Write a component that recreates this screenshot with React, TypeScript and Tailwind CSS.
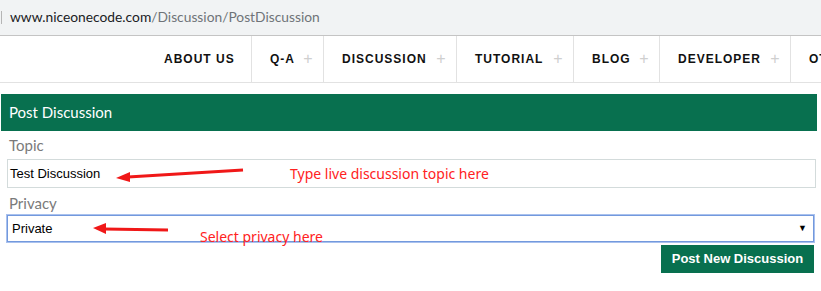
import React from 'react';

const navItems = [
  { label: 'ABOUT US', width: 'w-[106px]', plus: false },
  { label: 'Q-A', width: 'w-[72px]', plus: true },
  { label: 'DISCUSSION', width: 'w-[133px]', plus: true },
  { label: 'TUTORIAL', width: 'w-[117px]', plus: true },
  { label: 'BLOG', width: 'w-[86px]', plus: true },
  { label: 'DEVELOPER', width: 'w-[131px]', plus: true },
  { label: 'OTHERS', width: 'w-[120px]', plus: true },
];

function AddressBar() {
  return (
    <div className="h-[36px] bg-[#f1f3f4] border-b border-[#c4c4c4] flex items-center">
      <div className="w-px h-[13px] bg-[#b5b5b5] ml-px mr-[8px]" />
      <span className="text-[13.8px] font-['Lato',sans-serif] text-[#202124]">
        www.niceonecode.com<span className="text-[#6f7378]">/Discussion/PostDiscussion</span>
      </span>
    </div>
  );
}

function NavBar() {
  return (
    <div className="h-[47px] border-b border-[#e2e2e2] flex pl-[146px] overflow-hidden whitespace-nowrap">
      {navItems.map((item, i) => (
        <div
          key={item.label}
          className={`${item.width} shrink-0 h-full flex items-center justify-between pl-[18px] pr-[10px] ${
            i < navItems.length - 1 ? 'border-r border-[#e2e2e2]' : ''
          }`}
        >
          <span className="font-['Liberation_Sans',sans-serif] font-bold text-[12px] tracking-[1px] text-[#111]">
            {item.label}
          </span>
          {item.plus && (
            <span className="w-[10px] text-center text-[16px] leading-none text-[#cfcfcf] font-['Liberation_Sans',sans-serif]">
              +
            </span>
          )}
        </div>
      ))}
    </div>
  );
}

function PostForm() {
  return (
    <div className="relative pt-[11px] font-['Lato',sans-serif]">
      <div className="ml-px w-[816px] h-[37px] bg-[#08704f] flex items-center pl-[8px]">
        <span className="text-white text-[15px]">Post Discussion</span>
      </div>

      <div className="pl-[7px] pr-[5px]">
        <div className="mt-[4px] h-[24px] flex items-center pb-[3px] pl-[2px] text-[15px] text-[#7a7a7a]">Topic</div>
        <div className="h-[29px] border border-[#d3dbdb] flex items-center pl-[2px] font-['Liberation_Sans',sans-serif] text-[13px] text-black">
          Test Discussion
        </div>

        <div className="mt-[4px] h-[23px] flex items-center pb-[1px] pl-[2px] text-[15px] text-[#7a7a7a]">Privacy</div>
        <div className="mr-[2px] h-[27px] border border-[#7399dd] shadow-[0_0_0_1px_#a9c1ee] flex items-center justify-between pl-[4px] pr-[6px] font-['Liberation_Sans',sans-serif] text-[13px] text-black">
          <span>Private</span>
          <span className="text-[9px]">▼</span>
        </div>

        <div className="flex justify-end mt-[3px] mr-[2px]">
          <button className="w-[153px] h-[28px] bg-[#08704f] text-white font-bold text-[13px] font-['Liberation_Sans',sans-serif]">
            Post New Discussion
          </button>
        </div>
      </div>

      <svg className="absolute left-0 top-0 pointer-events-none" width="821" height="200" viewBox="0 83 821 200">
        <line x1="243" y1="170" x2="128" y2="177" stroke="#f01818" strokeWidth="3" />
        <polygon points="116,178 130,172 130,182" fill="#f01818" />
        <line x1="168" y1="230" x2="104" y2="229" stroke="#f01818" strokeWidth="3" />
        <polygon points="93,228 106,223 106,234" fill="#f01818" />
      </svg>
      <span className="absolute left-[290px] top-[80px] text-[14px] text-[#f22] whitespace-nowrap font-['Noto_Sans',sans-serif]">
        Type live discussion topic here
      </span>
      <span className="absolute left-[200px] top-[143px] text-[14px] text-[#f22] whitespace-nowrap font-['Noto_Sans',sans-serif]">
        Select privacy here
      </span>
    </div>
  );
}

export default function App() {
  return (
    <div className="w-[821px] h-[291px] bg-white overflow-hidden">
      <AddressBar />
      <NavBar />
      <PostForm />
    </div>
  );
}
